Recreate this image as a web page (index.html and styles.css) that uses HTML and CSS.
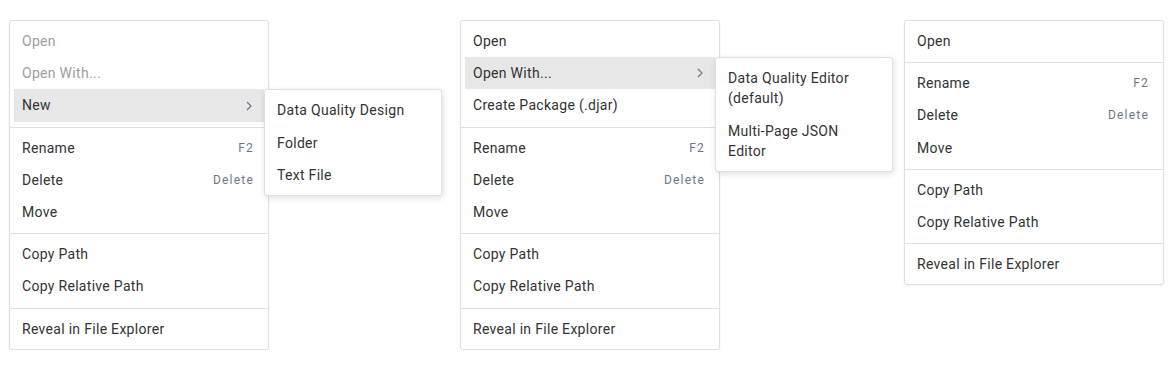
FILE: index.html
```html
<!DOCTYPE html>
<html lang="en">
<head>
    <meta charset="UTF-8">
    <meta name="viewport" content="width=device-width, initial-scale=1.0">
    <title>Explorer Context Menus</title>
    <link rel="stylesheet" href="styles.css">
</head>
<body>
    <div class="demos">
        <!-- New submenu open -->
        <div class="menu">
            <div class="item disabled">Open</div>
            <div class="item disabled">Open With...</div>
            <div class="item active has-sub">
                <span class="label">New</span>
                <svg class="chevron" width="6" height="10" viewBox="0 0 6 10"><path d="M1 1l4 4-4 4" fill="none" stroke="currentColor" stroke-width="1.2"/></svg>
                <div class="menu submenu sub-new">
                    <div class="item">Data Quality Design</div>
                    <div class="item">Folder</div>
                    <div class="item">Text File</div>
                </div>
            </div>
            <div class="sep"></div>
            <div class="item"><span class="label">Rename</span><span class="key">F2</span></div>
            <div class="item"><span class="label">Delete</span><span class="key">Delete</span></div>
            <div class="item">Move</div>
            <div class="sep"></div>
            <div class="item">Copy Path</div>
            <div class="item">Copy Relative Path</div>
            <div class="sep"></div>
            <div class="item">Reveal in File Explorer</div>
        </div>

        <!-- Open With submenu open -->
        <div class="menu">
            <div class="item">Open</div>
            <div class="item active has-sub">
                <span class="label">Open With...</span>
                <svg class="chevron" width="6" height="10" viewBox="0 0 6 10"><path d="M1 1l4 4-4 4" fill="none" stroke="currentColor" stroke-width="1.2"/></svg>
                <div class="menu submenu sub-open">
                    <div class="item">Data Quality Editor (default)</div>
                    <div class="item">Multi-Page JSON Editor</div>
                </div>
            </div>
            <div class="item">Create Package (.djar)</div>
            <div class="sep"></div>
            <div class="item"><span class="label">Rename</span><span class="key">F2</span></div>
            <div class="item"><span class="label">Delete</span><span class="key">Delete</span></div>
            <div class="item">Move</div>
            <div class="sep"></div>
            <div class="item">Copy Path</div>
            <div class="item">Copy Relative Path</div>
            <div class="sep"></div>
            <div class="item">Reveal in File Explorer</div>
        </div>

        <!-- folder menu -->
        <div class="menu">
            <div class="item">Open</div>
            <div class="sep"></div>
            <div class="item"><span class="label">Rename</span><span class="key">F2</span></div>
            <div class="item"><span class="label">Delete</span><span class="key">Delete</span></div>
            <div class="item">Move</div>
            <div class="sep"></div>
            <div class="item">Copy Path</div>
            <div class="item">Copy Relative Path</div>
            <div class="sep"></div>
            <div class="item">Reveal in File Explorer</div>
        </div>
    </div>
</body>
</html>
```

FILE: styles.css
```css
body {
    margin: 0;
    background-color: #fff;
    font-family: Roboto, "Liberation Sans", sans-serif;
    font-size: 14px;
    letter-spacing: 0.3px;
    color: #333;
}
.demos {
    display: grid;
    grid-template-columns: 451px 444px 260px;
    align-items: start;
    padding: 20px 0 0 9px;
}
.menu {
    width: 260px;
    box-sizing: border-box;
    padding: 4px;
    background-color: #fff;
    border: 1px solid #e0e0e0;
    border-radius: 3px;
    box-shadow: 0 1px 3px rgba(0, 0, 0, 0.06);
}
.item {
    display: flex;
    align-items: center;
    padding: 6px 10px 6px 8px;
    line-height: 20.2px;
    white-space: nowrap;
}
.item .label {
    flex: 1;
}
.item.disabled {
    color: #9e9e9e;
}
.item.active {
    background-color: #e7e7e7;
}
.has-sub {
    position: relative;
}
.chevron {
    color: #6b778a;
    margin-right: 2px;
}
.key {
    font-size: 12px;
    letter-spacing: 1.2px;
    color: #6b778a;
}
.sep {
    height: 1px;
    margin: 5px -4px 4px;
    background-color: #e0e0e0;
}
.submenu {
    position: absolute;
    top: 0;
    left: 100%;
    color: #333;
    box-shadow: 1px 2px 6px rgba(0, 0, 0, 0.12);
    z-index: 2;
}
.submenu .item {
    white-space: normal;
}
.sub-new {
    width: 178px;
}
.sub-open {
    width: 178px;
}
```
